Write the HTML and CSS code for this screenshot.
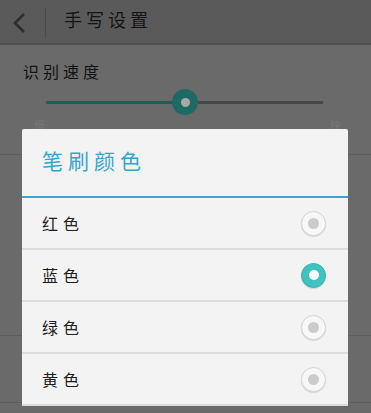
FILE: index.html
```html
<!DOCTYPE html>
<html lang="zh">
<head>
<meta charset="utf-8">
<link rel="stylesheet" href="styles.css">
</head>
<body>
<div class="screen">
  <header class="topbar">
    <span class="back">
      <svg width="16" height="22" viewBox="0 0 16 22"><path d="M13 2 L4 11 L13 20" fill="none" stroke="#2e2e2e" stroke-width="2.6"/></svg>
    </span>
    <span class="vsep"></span>
    <span class="title">手写设置</span>
  </header>
  <section class="content">
    <div class="label">识别速度</div>
    <div class="slider">
      <div class="track-on"></div>
      <div class="thumb"><span></span></div>
      <div class="track-off"></div>
    </div>
    <div class="ticks"><span>慢</span><span>快</span></div>
    <div class="bgrow tall"></div>
    <div class="bgrow last"></div>
  </section>

  <div class="dialog">
    <div class="dtitle">笔刷颜色</div>
    <div class="opt"><span>红色</span><i class="radio"></i></div>
    <div class="opt"><span>蓝色</span><i class="radio on"></i></div>
    <div class="opt"><span>绿色</span><i class="radio"></i></div>
    <div class="opt"><span>黄色</span><i class="radio"></i></div>
  </div>
</div>
</body>
</html>
```

FILE: styles.css
```css
* { box-sizing: border-box; }
html, body { margin: 0; padding: 0; }
body {
  width: 371px;
  height: 413px;
  overflow: hidden;
  background: #6a6a6a;
  font-family: "Noto Sans CJK SC", "Noto Sans", sans-serif;
}
.screen { position: relative; width: 371px; height: 413px; overflow: hidden; }
.topbar {
  height: 45px;
  background: #5a5a5a;
  border-bottom: 2px solid #4f4f4f;
  display: flex;
  align-items: center;
}
.back { width: 45px; display: flex; justify-content: center; padding-right: 8px; padding-top: 2px; }
.vsep { width: 1px; height: 30px; background: #4c4c4c; margin-top: 2px; }
.title {
  margin-left: 18px;
  font-size: 18px;
  letter-spacing: 4px;
  color: #151515;
  margin-top: -5px;
}
.content { background: #6a6a6a; }
.label {
  padding: 14px 0 0 23px;
  font-size: 16px;
  letter-spacing: 4px;
  color: #121212;
  height: 44px;
}
.slider {
  display: flex;
  align-items: center;
  margin-left: 46px;
  width: 277px;
  height: 26px;
}
.track-on { width: 126px; height: 3px; background: #1e5e55; }
.track-off { flex: 1; height: 3px; background: #474747; }
.thumb {
  width: 26px; height: 26px;
  border-radius: 50%;
  background: #1c6a61;
  display: flex; align-items: center; justify-content: center;
}
.thumb span { width: 9px; height: 9px; border-radius: 50%; background: #a8a8a8; }
.ticks {
  display: flex;
  justify-content: space-between;
  padding: 2px 30px 0 34px;
  font-size: 11px;
  color: #777;
  height: 39px;
}
.bgrow { height: 67px; border-top: 1px solid #5e5e5e; }
.bgrow.tall { height: 181px; }
.bgrow.last { height: 68px; border-bottom: 1px solid #5e5e5e; }

.dialog {
  position: absolute;
  left: 22px;
  top: 129px;
  width: 326px;
  background: #f3f3f3;
  border-radius: 2px;
}
.dtitle {
  height: 69px;
  padding: 16px 0 0 20px;
  font-size: 21px;
  letter-spacing: 5px;
  color: #35a4cd;
  border-bottom: 2px solid #39a7d0;
}
.opt {
  height: 52px;
  border-bottom: 2px solid #dcdcdc;
  display: flex;
  align-items: center;
  justify-content: space-between;
  padding: 0 22px 0 20px;
}
.opt span {
  font-size: 16px;
  letter-spacing: 5px;
  color: #1e1e1e;
}
.radio {
  width: 25px; height: 25px;
  border-radius: 50%;
  background: #f7f7f7;
  border: 1.5px solid #d4d4d4;
  box-shadow: 0 1px 1px rgba(0,0,0,0.12);
  display: flex; align-items: center; justify-content: center;
}
.radio::after {
  content: "";
  width: 11px; height: 11px;
  border-radius: 50%;
  background: #cbcbcb;
}
.radio.on {
  background: #3ec4c0;
  border-color: #37b2ae;
}
.radio.on::after { background: #ffffff; width: 10px; height: 10px; }
```
